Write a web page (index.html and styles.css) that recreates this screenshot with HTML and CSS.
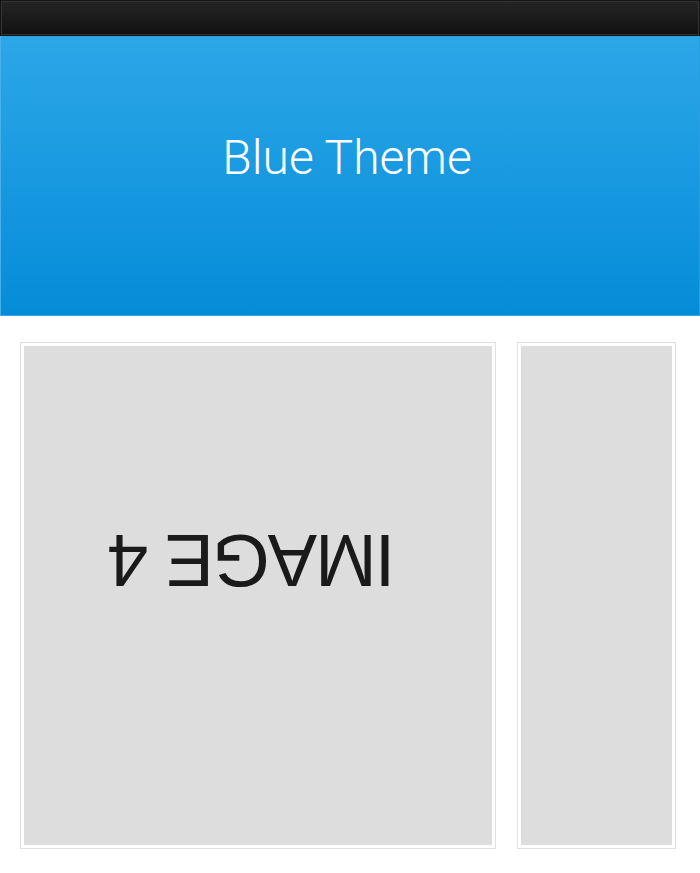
FILE: index.html
```html
<!DOCTYPE html>
<html>
<head>
<meta charset="utf-8">
<link rel="stylesheet" href="styles.css">
</head>
<body>
<div class="topbar"></div>
<header class="hero">
  <h1 class="hero-title">Blue Theme</h1>
</header>
<main class="content">
  <div class="frame frame-main">
    <div class="frame-inner inner-main">
      <span class="image-label">IMAGE 4</span>
    </div>
  </div>
  <div class="frame frame-side">
    <div class="frame-inner"></div>
  </div>
</main>
</body>
</html>
```
FILE: styles.css
```css
* { box-sizing: border-box; }
html, body { margin: 0; padding: 0; background: #ffffff; }
body { width: 700px; height: 873px; overflow: hidden; font-family: "Liberation Sans", Arial, sans-serif; }

.topbar {
  height: 36px;
  background: linear-gradient(#252525, #111111);
  border: 1px solid #141414;
  box-shadow: inset 0 0 0 1px #333333;
}

.hero {
  height: 280px;
  background: linear-gradient(#2ca7e8, #058cd8);
  border-left: 1px solid #45b0ea;
  border-right: 1px solid #2a9fe0;
  border-bottom: 1px solid #3aa6e6;
  padding-top: 98px;
  padding-right: 6px;
  text-align: center;
}

.hero-title {
  margin: 0;
  font-family: Roboto, "Liberation Sans", sans-serif;
  font-weight: 300;
  font-size: 48px;
  line-height: 48px;
  color: #ffffff;
}

.content {
  display: flex;
  gap: 21px;
  padding: 26px 24px 0 20px;
}

.frame {
  height: 507px;
  border: 1px solid #e0e0e0;
  padding: 3px;
  background: #ffffff;
}
.frame-main { width: 476px; }
.frame-side { width: 159px; }

.frame-inner {
  height: 100%;
  background: #dddddd;
}

.inner-main {
  text-align: center;
  padding-top: 177px;
  padding-right: 12px;
}

.image-label {
  display: inline-block;
  font-size: 74px;
  line-height: 74px;
  letter-spacing: -2px;
  color: #1a1a1a;
  transform: rotate(180deg);
}
```
